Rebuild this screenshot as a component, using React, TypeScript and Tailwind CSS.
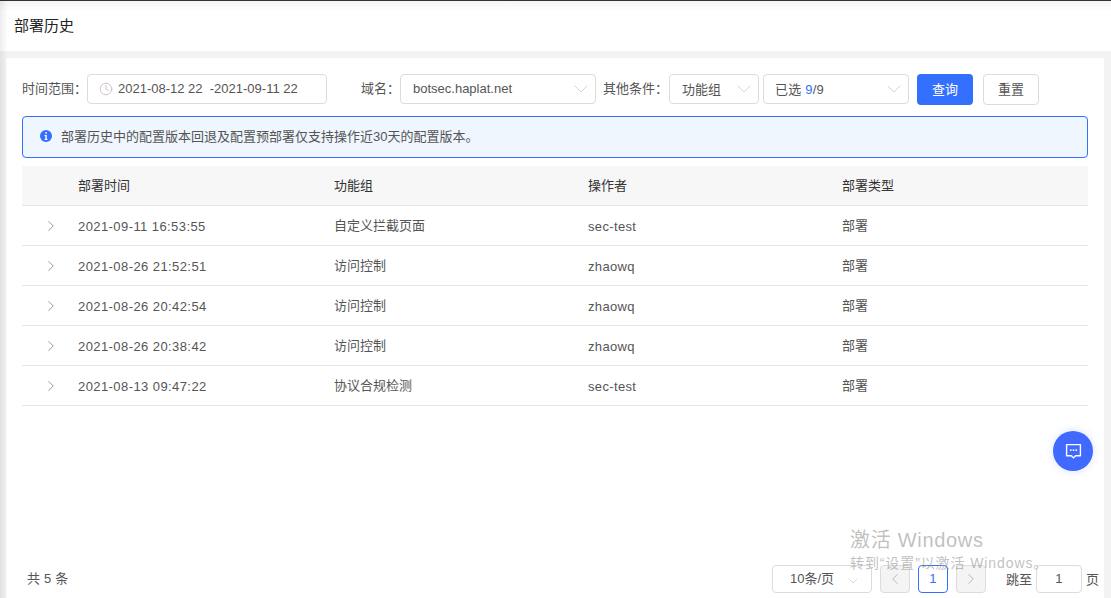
import { ChevronDown, ChevronLeft, ChevronRight, Clock } from "lucide-react"

const rows = [
  { time: "2021-09-11 16:53:55", group: "自定义拦截页面", user: "sec-test", type: "部署" },
  { time: "2021-08-26 21:52:51", group: "访问控制", user: "zhaowq", type: "部署" },
  { time: "2021-08-26 20:42:54", group: "访问控制", user: "zhaowq", type: "部署" },
  { time: "2021-08-26 20:38:42", group: "访问控制", user: "zhaowq", type: "部署" },
  { time: "2021-08-13 09:47:22", group: "协议合规检测", user: "sec-test", type: "部署" },
]

const font = "font-['Liberation_Sans','Noto_Sans_CJK_SC',sans-serif]"

function Caret() {
  return <ChevronDown className="h-6 w-6 text-[#c8c8c8]" strokeWidth={0.8} />
}

export default function App() {
  return (
    <div className={`relative flex h-[598px] w-[1111px] flex-col overflow-hidden bg-[#f3f3f3] text-[13px] text-[#555] ${font}`}>
      {/* Header */}
      <header className="flex h-[51px] shrink-0 items-center border-t border-[#333] bg-white bg-gradient-to-b from-[#f4f4f4] to-white to-[10px] pl-[14px]">
        <h1 className="text-[15px] font-normal text-[#222]">部署历史</h1>
      </header>

      <div className="mt-[7px] ml-[6px] mr-[7px] flex min-h-0 flex-1 flex-col bg-white px-4 pt-4">
        {/* Filters */}
        <div className="flex h-[31px] shrink-0 items-start">
          <span className="mt-[5px] w-[65px]">时间范围：</span>
          <div className="flex h-[30px] w-[240px] items-center rounded-sm border border-[#dcdcdc] pl-[11px]">
            <Clock className="mr-[5px] h-[14px] w-[14px] text-[#c9bcc1]" strokeWidth={1.5} />
            2021-08-12 22&nbsp;&nbsp;-2021-09-11 22
          </div>
          <span className="mt-[5px] ml-[34px] w-[39px]">域名：</span>
          <div className="flex h-[30px] w-[196px] items-center justify-between rounded-sm border border-[#dcdcdc] pl-3 pr-[2px]">
            botsec.haplat.net
            <Caret />
          </div>
          <span className="mt-[5px] ml-[7px] w-[66px]">其他条件：</span>
          <div className="flex h-[30px] w-[90px] items-center justify-between rounded-sm border border-[#dcdcdc] pl-3 pr-[2px]">
            <span className="mt-px">功能组</span>
            <Caret />
          </div>
          <div className="ml-1 flex h-[30px] w-[146px] items-center justify-between rounded-sm border border-[#dcdcdc] pl-[11px] pr-[2px]">
            <span className="mt-px tracking-[0.2px]">
              已选 <span className="text-[#3370ff]">9</span>/9
            </span>
            <Caret />
          </div>
          <button className="ml-2 h-[31px] w-[56px] rounded-sm bg-[#3370ff] text-white">查询</button>
          <button className="ml-[10px] h-[31px] w-[56px] rounded-sm border border-[#dcdcdc] bg-white text-[#555]">重置</button>
        </div>

        {/* Notice */}
        <div className="mt-[11px] flex h-[42px] w-[1066px] shrink-0 items-center rounded-sm border border-[#3370ff] bg-[#eff6fe] pl-[17px]">
          <svg viewBox="0 0 12 12" className="mr-[9px] mb-[3px] h-3 w-3">
            <circle cx="6" cy="6" r="6" fill="#3370ff" />
            <rect x="5.3" y="2.2" width="1.5" height="1.5" fill="#fff" />
            <path d="M4.6 5h2.2v4h.7v.9H4.6V9h.7V5.9h-.7z" fill="#fff" />
          </svg>
          部署历史中的配置版本回退及配置预部署仅支持操作近30天的配置版本。
        </div>

        {/* Table */}
        <div className="mt-2 w-[1066px] shrink-0">
          <div className="grid h-10 grid-cols-[56px_256px_254px_254px_1fr] items-center border-b border-[#e6e6e6] bg-[#f7f7f7] text-[#333]">
            <span />
            <span>部署时间</span>
            <span>功能组</span>
            <span>操作者</span>
            <span>部署类型</span>
          </div>
          {rows.map((row) => (
            <div
              key={row.time}
              className="grid h-10 grid-cols-[56px_256px_254px_254px_1fr] items-center border-b border-[#e6e6e6]"
            >
              <ChevronRight className="ml-5 h-[18px] w-[18px] text-[#a08a74]" strokeWidth={1.2} />
              <span className="mt-[2px] tracking-[0.42px]">{row.time}</span>
              <span>{row.group}</span>
              <span className="mt-[2px] tracking-[0.35px]">{row.user}</span>
              <span>{row.type}</span>
            </div>
          ))}
        </div>

        <div className="flex-1" />

        {/* Pagination */}
        <div className="flex h-[33px] w-[1077px] shrink-0 items-start justify-between pl-[5px]">
          <span className="mt-[4px] tracking-[0.2px]">共 5 条</span>
          <div className="flex items-start">
            <div className="flex h-[28px] w-[100px] items-center justify-between rounded-sm border border-[#dcdcdc] pl-[17px] pr-[10px]">
              10条/页
              <ChevronDown className="mt-1 h-4 w-4 text-[#c8c8c8]" strokeWidth={1} />
            </div>
            <div className="ml-2 flex h-[28px] w-[30px] items-center justify-center rounded-sm border border-[#dcdcdc] bg-[#f4f4f4]">
              <ChevronLeft className="h-[18px] w-[18px] text-[#b5b5b5]" strokeWidth={1.3} />
            </div>
            <div className="ml-2 flex h-[28px] w-[30px] items-center justify-center rounded-sm border border-[#3370ff] text-[#3370ff]">1</div>
            <div className="ml-2 flex h-[28px] w-[30px] items-center justify-center rounded-sm border border-[#dcdcdc] bg-[#f4f4f4]">
              <ChevronRight className="h-[18px] w-[18px] text-[#b5b5b5]" strokeWidth={1.3} />
            </div>
            <span className="ml-5 mt-[5px]">跳至</span>
            <div className="ml-1 flex h-[28px] w-[46px] items-center justify-center rounded-sm border border-[#dcdcdc]">1</div>
            <span className="ml-[4px] mt-[5px]">页</span>
          </div>
        </div>
      </div>

      {/* Left edge shadow */}
      <div className="pointer-events-none absolute inset-y-0 left-0 w-[8px] bg-gradient-to-r from-[rgba(0,0,0,0.07)] to-transparent" />

      {/* Chat button */}
      <button className="absolute left-[1053px] top-[431px] flex h-10 w-10 items-center justify-center rounded-full bg-[#4069ff] shadow-[0_0_8px_rgba(64,105,255,0.2)]">
        <svg viewBox="0 0 16 16" className="h-[17px] w-[17px]" fill="none">
          <path d="M1.5 1.5h13v10.5h-4.5L8 14l-2-2H1.5z" stroke="#fff" strokeWidth="1.3" strokeLinejoin="round" />
          <rect x="4.6" y="6" width="1.6" height="1.4" fill="#fff" />
          <rect x="7.2" y="6" width="1.6" height="1.4" fill="#fff" />
          <rect x="9.8" y="6" width="1.6" height="1.4" fill="#fff" />
        </svg>
      </button>

      {/* Watermark */}
      <div className="pointer-events-none absolute left-[850px] top-[526px] text-[rgba(150,150,150,0.6)]">
        <div className="text-[20px] leading-[28px] tracking-[0.7px]">激活 Windows</div>
        <div className="-mt-[1px] text-[14px] leading-[20px] tracking-[0.9px] whitespace-nowrap">转到“设置”以激活 Windows。</div>
      </div>
    </div>
  )
}
